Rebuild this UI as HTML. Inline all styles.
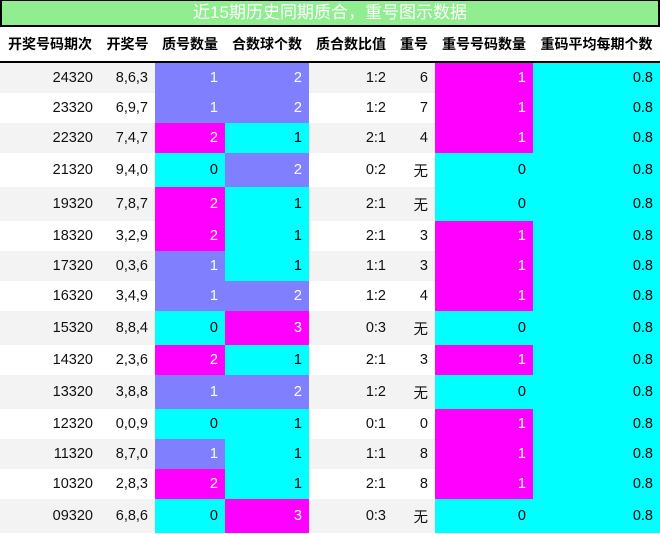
<!DOCTYPE html>
<html><head><meta charset="utf-8"><style>
body{margin:0;width:660px;height:534px;overflow:hidden;background:#fff;font-family:"Liberation Sans","Noto Sans CJK SC",sans-serif;}
.t{position:absolute;left:0;top:0;width:656px;height:24px;background:#90ee90;border:2px solid #000;border-width:1px 2px 2px 2px;color:#fff;font-size:17px;line-height:23px;text-align:center;}
table{position:absolute;left:0;top:26px;border-collapse:collapse;table-layout:fixed;width:660px;}
th{height:35px;font-size:14px;font-weight:bold;text-align:center;padding:0;border-bottom:2px solid #000;white-space:nowrap;}
td{padding:0 7px 0 0;text-align:right;font-size:14.5px;color:#111;height:30px;}
tr.w td{height:34px}
tr:nth-child(even) td{background:#f3f3f3}
tr:nth-child(odd) td{background:#fff}
td.B{background:#8080ff!important;color:#fff}
td.M{background:#ff00ff!important;color:#fff}
td.C{background:#00ffff!important;color:#000}
</style></head><body>
<div class="t">近15期历史同期质合，重号图示数据</div>
<table>
<colgroup><col style="width:100px"><col style="width:55px"><col style="width:70px"><col style="width:84px"><col style="width:84px"><col style="width:42px"><col style="width:98px"><col style="width:127px"></colgroup>
<tr><th>开奖号码期次</th><th>开奖号</th><th>质号数量</th><th>合数球个数</th><th>质合数比值</th><th>重号</th><th>重号号码数量</th><th>重码平均每期个数</th></tr>
<tr><td>24320</td><td>8,6,3</td><td class="B">1</td><td class="B">2</td><td>1:2</td><td>6</td><td class="M">1</td><td class="C">0.8</td></tr>
<tr><td>23320</td><td>6,9,7</td><td class="B">1</td><td class="B">2</td><td>1:2</td><td>7</td><td class="M">1</td><td class="C">0.8</td></tr>
<tr><td>22320</td><td>7,4,7</td><td class="M">2</td><td class="C">1</td><td>2:1</td><td>4</td><td class="M">1</td><td class="C">0.8</td></tr>
<tr class="w"><td>21320</td><td>9,4,0</td><td class="C">0</td><td class="B">2</td><td>0:2</td><td>无</td><td class="C">0</td><td class="C">0.8</td></tr>
<tr class="w"><td>19320</td><td>7,8,7</td><td class="M">2</td><td class="C">1</td><td>2:1</td><td>无</td><td class="C">0</td><td class="C">0.8</td></tr>
<tr><td>18320</td><td>3,2,9</td><td class="M">2</td><td class="C">1</td><td>2:1</td><td>3</td><td class="M">1</td><td class="C">0.8</td></tr>
<tr><td>17320</td><td>0,3,6</td><td class="B">1</td><td class="C">1</td><td>1:1</td><td>3</td><td class="M">1</td><td class="C">0.8</td></tr>
<tr><td>16320</td><td>3,4,9</td><td class="B">1</td><td class="B">2</td><td>1:2</td><td>4</td><td class="M">1</td><td class="C">0.8</td></tr>
<tr class="w"><td>15320</td><td>8,8,4</td><td class="C">0</td><td class="M">3</td><td>0:3</td><td>无</td><td class="C">0</td><td class="C">0.8</td></tr>
<tr><td>14320</td><td>2,3,6</td><td class="M">2</td><td class="C">1</td><td>2:1</td><td>3</td><td class="M">1</td><td class="C">0.8</td></tr>
<tr class="w"><td>13320</td><td>3,8,8</td><td class="B">1</td><td class="B">2</td><td>1:2</td><td>无</td><td class="C">0</td><td class="C">0.8</td></tr>
<tr><td>12320</td><td>0,0,9</td><td class="C">0</td><td class="C">1</td><td>0:1</td><td>0</td><td class="M">1</td><td class="C">0.8</td></tr>
<tr><td>11320</td><td>8,7,0</td><td class="B">1</td><td class="C">1</td><td>1:1</td><td>8</td><td class="M">1</td><td class="C">0.8</td></tr>
<tr><td>10320</td><td>2,8,3</td><td class="M">2</td><td class="C">1</td><td>2:1</td><td>8</td><td class="M">1</td><td class="C">0.8</td></tr>
<tr class="w"><td>09320</td><td>6,8,6</td><td class="C">0</td><td class="M">3</td><td>0:3</td><td>无</td><td class="C">0</td><td class="C">0.8</td></tr>
</table>
</body></html>
